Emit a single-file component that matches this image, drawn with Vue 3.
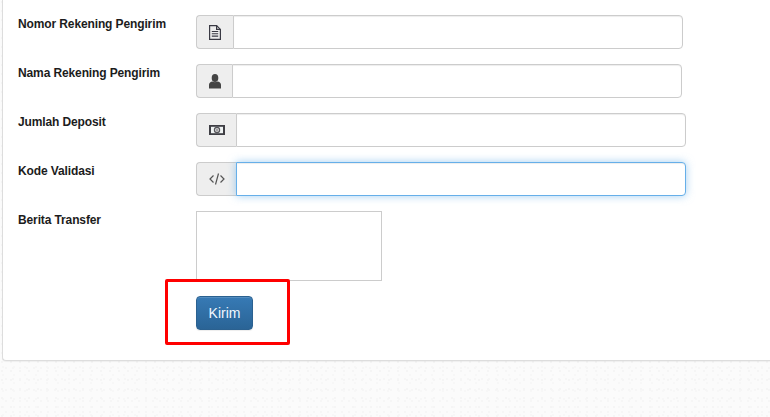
<script setup>
const fields = [
  { label: 'Nomor Rekening Pengirim', icon: 'file', addon: 37, width: 487 },
  { label: 'Nama Rekening Pengirim', icon: 'user', addon: 36, width: 486 },
  { label: 'Jumlah Deposit', icon: 'money', addon: 40, width: 490 },
  { label: 'Kode Validasi', icon: 'code', addon: 40, width: 490, focus: true },
]
</script>

<template>
  <main class="page">
    <section class="panel">
      <form class="form" @submit.prevent>
        <div v-for="f in fields" :key="f.label" class="row">
          <label class="label">{{ f.label }}</label>
          <div class="group" :style="{ width: f.width + 'px' }">
            <span class="addon" :style="{ width: f.addon + 'px' }">
              <svg v-if="f.icon === 'file'" class="icon" width="14" height="15" viewBox="0 0 14 15" fill="none" stroke="#3a3a44" stroke-width="1.200">
                <path d="M1.600 .6h7l3.800 3.800v10H1.600z" />
                <path d="M8.600 .6v3.800h3.800" />
                <path d="M3.800 6.500h6.400M3.800 8.800h6.400M3.800 11.100h6.400" stroke-width="1.100" />
              </svg>
              <svg v-else-if="f.icon === 'user'" class="icon" width="14" height="15" viewBox="0 0 14 15" fill="#444">
                <ellipse cx="7" cy="4" rx="3.300" ry="4" />
                <path d="M1 14.500v-3.700c0-1.900 1.700-2.900 3.500-3.200.9.700 4.100.7 5 0 1.800.3 3.500 1.300 3.500 3.200v3.700z" />
              </svg>
              <svg v-else-if="f.icon === 'money'" class="icon" width="16" height="10" viewBox="0 0 16 10">
                <rect x="0" y="0" width="16" height="10" fill="#3f3f45" />
                <rect x="2" y="1.800" width="12" height="6.400" fill="#eef2f2" />
                <circle cx="8" cy="5" r="3.200" fill="#55555a" />
                <circle cx="8" cy="5" r="1.900" fill="#eee" />
                <rect x="7.500" y="3.600" width="1" height="2.800" fill="#55555a" />
              </svg>
              <svg v-else class="icon" width="16" height="14" viewBox="0 0 16 14" fill="none" stroke="#555" stroke-width="1.200">
                <path d="M4.500 3.500 1 7l3.500 3.500M11.500 3.500 15 7l-3.500 3.500M9.500 1.500l-3 11" />
              </svg>
            </span>
            <input class="input" :class="{ focused: f.focus }" type="text" />
          </div>
        </div>
        <div class="row">
          <label class="label">Berita Transfer</label>
          <textarea class="note"></textarea>
        </div>
        <div class="actions">
          <button class="send" type="submit">Kirim</button>
          <span class="highlight"></span>
        </div>
      </form>
    </section>
  </main>
</template>

<style>
html, body { margin: 0; background: #fafafa; overflow: hidden; }
</style>

<style scoped>
.page {
  width: 770px;
  height: 417px;
  overflow: hidden;
  font-family: "Liberation Sans", Arial, sans-serif;
  background-color: #fbfbfb;
  background-image:
    radial-gradient(circle at 2px 2px, #f5f5f5 1px, transparent 1.500px),
    radial-gradient(circle at 6px 5px, #f6f6f6 1px, transparent 1.500px),
    radial-gradient(circle at 3px 7px, #f7f7f7 1px, transparent 1.500px);
  background-size: 9px 9px, 7px 11px, 11px 8px;
}
.panel {
  margin-left: 2px;
  height: 361px;
  box-sizing: border-box;
  background: #fff;
  border: 1px solid #ddd;
  border-width: 0 0 1px 1px;
  border-bottom-left-radius: 4px;
  box-shadow: 0 1px 1px rgba(0, 0, 0, .05);
  padding: 15px 0 0 15px;
}
.row {
  display: flex;
  align-items: flex-start;
  margin-bottom: 15px;
}
.label {
  width: 178px;
  flex: none;
  font-size: 12px;
  font-weight: 700;
  line-height: 19px;
  color: #1c1c1c;
  letter-spacing: -.12px;
}
.group {
  display: flex;
  height: 34px;
}
.addon {
  flex: none;
  box-sizing: border-box;
  display: flex;
  align-items: center;
  justify-content: center;
  background: #eee;
  border: 1px solid #ccc;
  border-right: 0;
  border-radius: 4px 0 0 4px;
}
.icon { display: block; }
.input {
  flex: 1;
  min-width: 0;
  box-sizing: border-box;
  height: 34px;
  padding: 6px 12px;
  background: #fff;
  border: 1px solid #ccc;
  border-radius: 0 4px 4px 0;
  box-shadow: inset 0 1px 1px rgba(0, 0, 0, .075);
  outline: none;
}
.input.focused {
  border-color: #66afe9;
  box-shadow: inset 0 1px 1px rgba(0, 0, 0, .075), 0 0 8px rgba(102, 175, 233, .6);
}
.note {
  box-sizing: border-box;
  width: 186px;
  height: 70px;
  padding: 0;
  margin: 0;
  border: 1px solid #ccc;
  background: #fff;
  resize: none;
  display: block;
  outline: none;
}
.actions {
  position: relative;
  margin-left: 178px;
  height: 34px;
}
.send {
  display: block;
  width: 57px;
  height: 34px;
  padding: 0;
  font-family: inherit;
  font-size: 14px;
  color: #f2f8ff;
  background: linear-gradient(to bottom, #377ab5, #2a6496);
  border: 1px solid #2b6190;
  border-radius: 4px;
  box-shadow: inset 0 1px 0 rgba(255, 255, 255, .15), 0 1px 1px rgba(0, 0, 0, .075);
}
.highlight {
  position: absolute;
  left: -31px;
  top: -17px;
  width: 125px;
  height: 66px;
  box-sizing: border-box;
  border: 3px solid #f00;
  border-radius: 2px;
  pointer-events: none;
}
</style>
